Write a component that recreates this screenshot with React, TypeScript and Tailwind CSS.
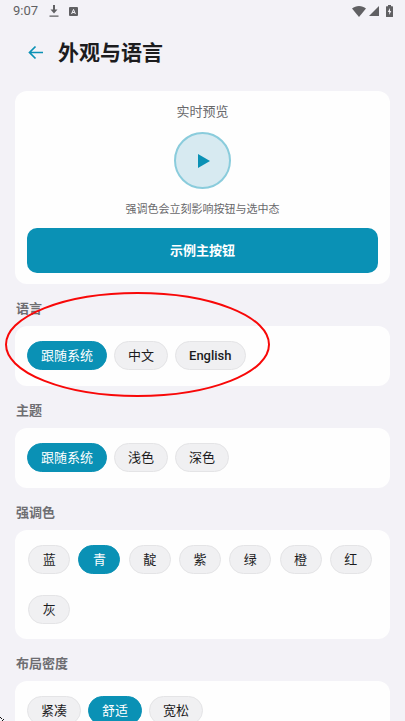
import { useState } from 'react';
import clsx from 'clsx';

const languages = ['跟随系统', '中文', 'English'];
const themes = ['跟随系统', '浅色', '深色'];
const accents = ['蓝', '青', '靛', '紫', '绿', '橙', '红', '灰'];
const densities = ['紧凑', '舒适', '宽松'];

function StatusBar() {
  return (
    <div className="flex h-[22px] shrink-0 items-center justify-between pl-[13px] pr-3 text-[#606063]">
      <div className="flex items-center">
        <span className="text-[13px] leading-[22px]">9:07</span>
        <svg className="ml-[11px]" width="10" height="12" viewBox="0 0 10 12" aria-hidden="true">
          <path d="M4 0h2v4.500h2.500L5 8.500 1.500 4.500H4zM0.500 10.500h9v1.300h-9z" fill="currentColor" />
        </svg>
        <svg className="ml-[10px]" width="9" height="9" viewBox="0 0 9 9" aria-hidden="true">
          <rect width="9" height="9" rx="1" fill="currentColor" />
          <path d="M2.600 7 4.500 2.400 6.400 7M3.200 5.500h2.600" fill="none" stroke="#f3f2f7" strokeWidth="1" />
        </svg>
      </div>
      <div className="flex items-center">
        <svg width="14" height="11" viewBox="0 0 14 11" aria-hidden="true">
          <path d="M7 11 0 2.600C2 .9 4.400 0 7 0s5 .9 7 2.600z" fill="currentColor" />
        </svg>
        <svg className="ml-[3px]" width="10" height="10" viewBox="0 0 10 10" aria-hidden="true">
          <path d="M10 0v10H0z" fill="currentColor" />
        </svg>
        <svg className="ml-[7px]" width="7" height="12" viewBox="0 0 7 12" aria-hidden="true">
          <path d="M2 0h3v1.200h1.400q.6 0 .6.6v9.600q0 .6-.6.6H.6q-.6 0-.6-.6V1.800q0-.6.6-.6H2z" fill="currentColor" />
          <path d="M4 3 1.800 7h1.400v3L5.300 6H4z" fill="#f3f2f7" />
        </svg>
      </div>
    </div>
  );
}

type ChipProps = { label: string; selected: boolean; onSelect: () => void };

function Chip({ label, selected, onSelect }: ChipProps) {
  return (
    <button
      type="button"
      aria-pressed={selected}
      onClick={onSelect}
      className={clsx(
        'h-[29px] min-w-[42px] rounded-full border px-[13px] text-[13px] leading-[27px] whitespace-nowrap',
        label === 'English' && 'font-medium',
        selected ? 'border-[#0a91b5] bg-[#0a91b5] text-white' : 'border-[#e4e4e6] bg-[#f0f0f2] text-[#1c1c1e]',
      )}
    >
      {label}
    </button>
  );
}

type SectionProps = { title: string; options: string[]; initial: string; grid?: boolean };

function Section({ title, options, initial, grid }: SectionProps) {
  const [value, setValue] = useState(initial);
  return (
    <section>
      <h2 className="flex h-[42px] items-center pt-2 pl-[1px] text-[13px] font-bold text-[#6e6e72]">{title}</h2>
      <div
        role="group"
        aria-label={title}
        className={clsx(
          'rounded-xl bg-[#fefefe] pt-[15px]',
          grid ? 'grid grid-cols-7 justify-items-center gap-y-[21px] pr-[14px] pb-[15px] pl-[9px]' : 'flex flex-wrap gap-[7px] px-3 pb-4',
        )}
      >
        {options.map((option) => (
          <Chip key={option} label={option} selected={option === value} onSelect={() => setValue(option)} />
        ))}
      </div>
    </section>
  );
}

export default function App() {
  return (
    <div className="relative flex h-screen flex-col overflow-hidden bg-[#f3f2f7] font-[Roboto,'Noto_Sans_CJK_SC',sans-serif] text-[#1c1c1e]" lang="zh-CN">
      <StatusBar />

      <header className="flex h-[62px] shrink-0 items-center gap-[14px] pl-7">
        <button type="button" aria-label="返回" className="text-[#0a91b5]">
          <svg width="16" height="16" viewBox="0 0 16 16" aria-hidden="true">
            <path d="M15 7.500H2M7.500 1.500 1.500 7.500 7.500 13.500" fill="none" stroke="currentColor" strokeWidth="1.700" />
          </svg>
        </button>
        <h1 className="text-[21px] leading-[30px] font-bold">外观与语言</h1>
      </header>

      <main className="min-h-0 flex-1 overflow-y-auto px-[15px] pt-[7px] pb-4 [scrollbar-width:none]">
        <section className="flex flex-col items-center rounded-xl bg-[#fefefe] px-3 pt-[11px] pb-[11px]">
          <p className="text-[13px] leading-5 text-[#68686b]">实时预览</p>
          <div className="mt-[10px] flex size-[57px] items-center justify-center rounded-full border-2 border-[#8accdc] bg-[#d7eaf1]">
            <svg className="ml-[3px]" width="12" height="14" viewBox="0 0 12 14" aria-hidden="true">
              <path d="M0 0v14l12-7z" fill="#0a91b5" />
            </svg>
          </div>
          <p className="mt-[13px] text-[11px] leading-4 text-[#68686b]">强调色会立刻影响按钮与选中态</p>
          <button type="button" className="mt-[10px] h-[45px] w-full rounded-[10px] bg-[#0a91b5] text-[13px] font-bold text-white">
            示例主按钮
          </button>
        </section>

        <Section title="语言" options={languages} initial="跟随系统" />
        <Section title="主题" options={themes} initial="跟随系统" />
        <Section title="强调色" options={accents} initial="青" grid />
        <Section title="布局密度" options={densities} initial="舒适" />
      </main>

      {/* hand-drawn highlight around the language options */}
      <svg className="pointer-events-none absolute top-[292px] left-[5px]" width="266" height="106" viewBox="0 0 266 106" aria-hidden="true">
        <ellipse cx="132.500" cy="52.500" rx="131.500" ry="51.500" fill="none" stroke="#f80808" strokeWidth="2" />
      </svg>
      <svg className="pointer-events-none absolute bottom-0 left-0" width="5" height="5" viewBox="0 0 5 5" aria-hidden="true">
        <path d="M0 1h1v1H0zM1 2h1v1H1zM3 3h1v1H3zM2 4h1v1H2z" fill="#111" />
      </svg>
    </div>
  );
}
